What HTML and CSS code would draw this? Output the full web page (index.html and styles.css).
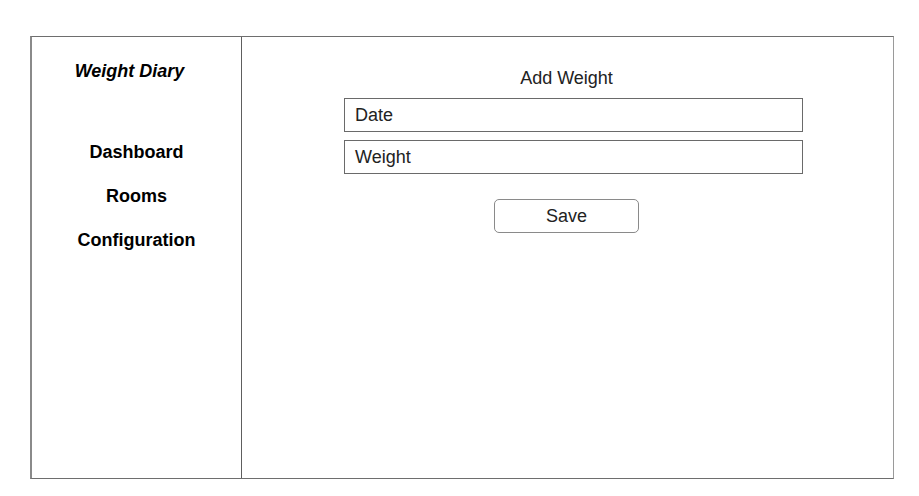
FILE: index.html
```html
<!DOCTYPE html>
<html>
<head>
<meta charset="utf-8">
<link rel="stylesheet" href="styles.css">
</head>
<body>
<div class="frame">
  <aside class="sidebar">
    <div class="brand">Weight Diary</div>
    <nav class="nav">
      <div class="nav-item">Dashboard</div>
      <div class="nav-item">Rooms</div>
      <div class="nav-item">Configuration</div>
    </nav>
  </aside>
  <main class="content">
    <div class="title">Add Weight</div>
    <div class="field">Date</div>
    <div class="field">Weight</div>
    <div class="button">Save</div>
  </main>
</div>
</body>
</html>
```
FILE: styles.css
```css
html, body {
  margin: 0;
  padding: 0;
  background: #ffffff;
}
body {
  font-family: "Liberation Sans", Arial, sans-serif;
  color: #000;
}
.frame {
  margin: 36px 0 0 30px;
  width: 864px;
  height: 443px;
  box-sizing: border-box;
  border: 1px solid #6e6e6e;
  border-left: 2px solid #8a8a8a;
  border-right: 1px solid #9a9a9a;
  display: flex;
}
.sidebar {
  width: 209px;
  border-right: 1px solid #5e5e5e;
  display: flex;
  flex-direction: column;
  align-items: center;
}
.brand {
  margin-top: 24px;
  margin-right: 14px;
  font-size: 18px;
  font-weight: bold;
  font-style: italic;
  line-height: 20px;
}
.nav {
  margin-top: 61px;
  display: flex;
  flex-direction: column;
  align-items: center;
  gap: 24px;
}
.nav-item {
  font-size: 18px;
  font-weight: bold;
  line-height: 20px;
}
.content {
  flex: 1;
  display: flex;
  flex-direction: column;
  align-items: center;
}
.title {
  margin-top: 31px;
  margin-right: 2px;
  font-size: 18px;
  line-height: 20px;
  color: #222;
}
.field {
  box-sizing: border-box;
  width: 459px;
  height: 34px;
  margin-left: 12px;
  border: 1px solid #6a6a6a;
  padding: 0 10px;
  font-size: 18px;
  line-height: 33px;
  color: #222;
}
.title + .field {
  margin-top: 10px;
}
.field + .field {
  margin-top: 8px;
}
.button {
  box-sizing: border-box;
  margin-top: 25px;
  margin-right: 2px;
  width: 145px;
  height: 34px;
  border: 1px solid #8a8a8a;
  border-radius: 5px;
  text-align: center;
  font-size: 18px;
  line-height: 33px;
  color: #222;
}
```
